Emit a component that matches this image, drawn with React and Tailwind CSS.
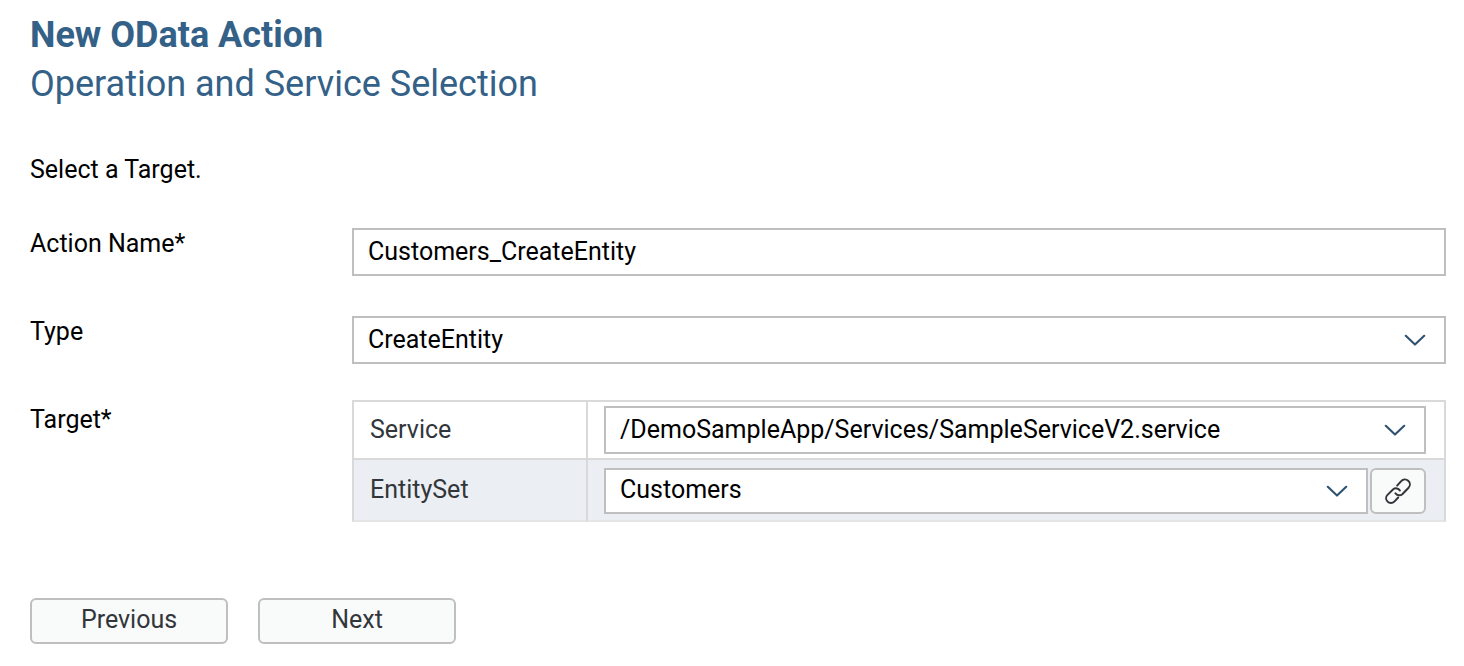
import { useId } from "react";

function Chevron() {
  return (
    <svg
      className="pointer-events-none absolute inset-y-0 right-5 my-auto h-3 w-[22px]"
      viewBox="0 0 22 12"
      fill="none"
      stroke="#2f5170"
      strokeWidth="2.1"
      strokeLinecap="round"
      strokeLinejoin="round"
      aria-hidden="true"
    >
      <path d="M1.8 1.8 L11 10.6 L20.2 1.8" />
    </svg>
  );
}

function LinkIcon() {
  return (
    <svg
      className="h-7 w-7"
      viewBox="0 0 28 28"
      fill="none"
      stroke="#32363a"
      strokeWidth="2"
      strokeLinecap="round"
      aria-hidden="true"
    >
      <path d="M13.1 8.6 L17.2 4.1 A4.7 4.7 0 0 1 24.6 10.7 L18.3 17.2 A4.7 4.7 0 0 1 11.4 16.3" />
      <path d="M15.9 13.5 A4.7 4.7 0 0 0 9.2 12.2 L3.5 17.9 A4.7 4.7 0 0 0 10.3 24.6 L14.2 20.5" />
    </svg>
  );
}

function Select({ label, id, value, size = "h-12" }) {
  return (
    <div className="relative min-w-0 flex-1">
      <select
        id={id}
        aria-label={label}
        defaultValue={value}
        className={`block w-full appearance-none border-2 border-[#bfbfbf] bg-white pr-14 pl-3.5 text-black ${size}`}
      >
        <option>{value}</option>
      </select>
      <Chevron />
    </div>
  );
}

const buttonClass =
  "flex h-[46px] items-center justify-center rounded-md border-2 border-[#bfbfbf] bg-[#f9fbfa] text-[#32363a]";

export default function App() {
  const nameId = useId();
  const typeId = useId();
  const targetId = useId();

  return (
    <main className="bg-white pt-[11px] pr-[18px] pb-5 pl-[30px] font-['Roboto','Liberation_Sans',sans-serif] text-[25px] leading-8 text-black">
      <header className="text-[#346187]">
        <h1 className="text-[36px] leading-[48px] font-bold">New OData Action</h1>
        <h2 className="text-[36px] leading-[50px]">Operation and Service Selection</h2>
      </header>

      <form onSubmit={(e) => e.preventDefault()}>
        <p className="mt-[45px]">Select a Target.</p>

        <div className="mt-[42px] grid grid-cols-[322px_minmax(0,1fr)] items-start">
          <label htmlFor={nameId}>Action Name*</label>
          <input
            id={nameId}
            type="text"
            defaultValue="Customers_CreateEntity"
            className="h-12 w-full border-2 border-[#bfbfbf] bg-white px-3.5 pb-0.5"
          />
        </div>

        <div className="mt-10 grid grid-cols-[322px_minmax(0,1fr)] items-start">
          <label htmlFor={typeId}>Type</label>
          <Select id={typeId} value="CreateEntity" />
        </div>

        <div className="mt-9 grid grid-cols-[322px_minmax(0,1fr)] items-start">
          <span id={targetId} className="pt-1">Target*</span>
          <table
            aria-labelledby={targetId}
            className="w-full table-fixed border-separate border-spacing-0 text-left"
          >
            <colgroup>
              <col className="w-[234px]" />
              <col />
            </colgroup>
            <tbody>
              <tr>
                <th scope="row" className="border-t-2 border-l-2 border-[#d9d9d9] px-4 font-normal text-[#32363a]">
                  Service
                </th>
                <td className="border-x-2 border-t-2 border-[#d9d9d9] py-1 pr-[18px] pl-4">
                  <div className="flex">
                    <Select label="Service" value="/DemoSampleApp/Services/SampleServiceV2.service" />
                  </div>
                </td>
              </tr>
              <tr className="bg-[#ebeef3]">
                <th scope="row" className="border-y-2 border-l-2 border-[#d9d9d9] border-b-[#e5e5e5] px-4 font-normal text-[#32363a]">
                  EntitySet
                </th>
                <td className="border-2 border-[#d9d9d9] border-b-[#e5e5e5] pt-2 pr-[18px] pb-1.5 pl-4">
                  <div className="flex gap-0.5">
                    <Select label="EntitySet" value="Customers" size="h-[46px] pb-0.5" />
                    <button type="button" aria-label="Link" className={`${buttonClass} w-14`}>
                      <LinkIcon />
                    </button>
                  </div>
                </td>
              </tr>
            </tbody>
          </table>
        </div>

        <div className="mt-[76px] flex gap-[30px]">
          <button type="button" className={`${buttonClass} w-[198px] pb-0.5`}>Previous</button>
          <button type="submit" className={`${buttonClass} w-[198px] pb-0.5`}>Next</button>
        </div>
      </form>
    </main>
  );
}
